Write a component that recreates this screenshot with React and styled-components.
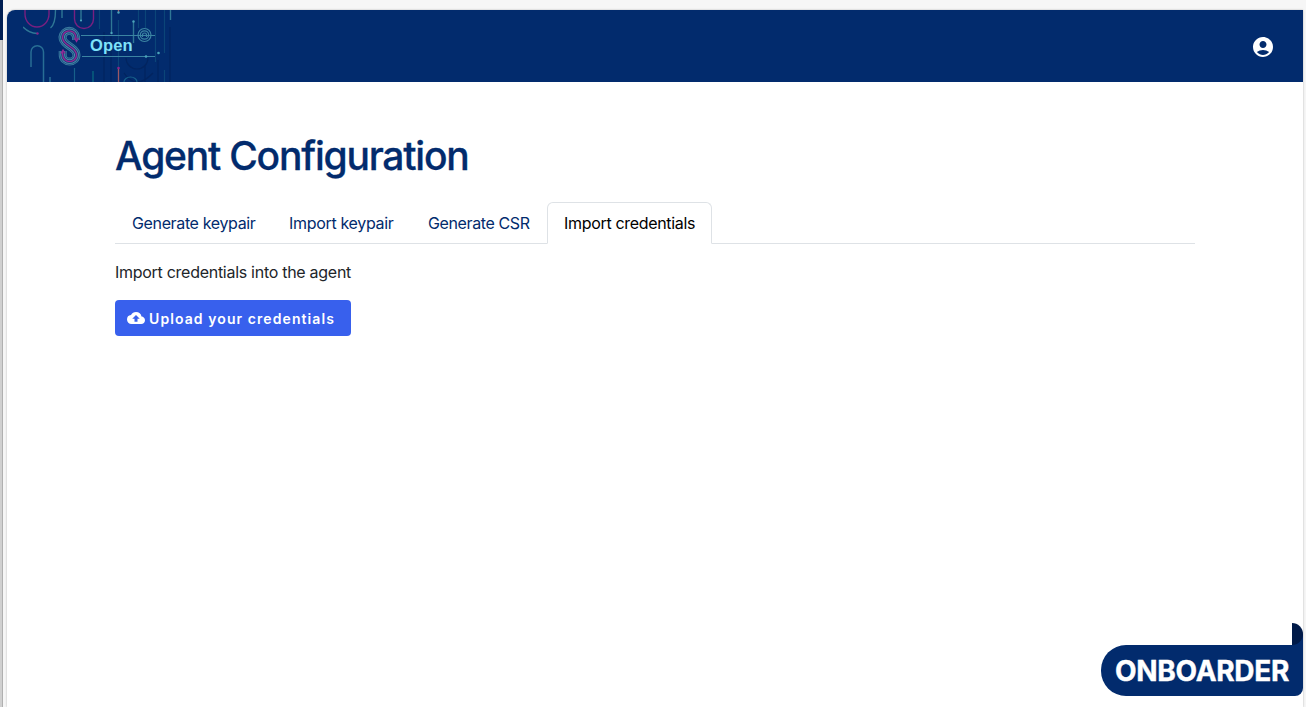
import React from "react";
import styled, { createGlobalStyle } from "styled-components";
import { MdAccountCircle, MdCloudUpload } from "react-icons/md";

const Global = createGlobalStyle`
  * { box-sizing: border-box; }
  html, body { margin: 0; height: 100%; overflow: hidden; }
  body { background: #f6f6f6; font-family: Inter, "Liberation Sans", sans-serif; font-size: 16px; line-height: 24px; color: #212529; }
`;

const Screen = styled.div`
  display: flex;
  height: 707px;
  width: 1306px;
`;

const BackWindow = styled.div`
  width: 3px;
  margin-right: 4px;
  background: linear-gradient(#001e52 0 40px, transparent 40px),
    linear-gradient(90deg, #d0d0d0 2px, #b0b0b0 2px);
`;

const AppWindow = styled.div`
  position: relative;
  display: flex;
  flex-direction: column;
  width: 1296px;
  margin-top: 10px;
  background: #fff;
  border-top-left-radius: 8px;
  overflow: hidden;
  box-shadow: 0 0 2px rgba(0, 0, 0, 0.3);
`;

const Header = styled.header`
  display: flex;
  justify-content: space-between;
  align-items: center;
  height: 72px;
  padding: 0 28px 0 16px;
  background: #022b6d;
`;

const Logo = styled.div`
  position: relative;
  width: 150px;
  height: 72px;
  svg { display: block; }
`;

const LogoText = styled.span`
  position: absolute;
  left: 67px;
  top: 23px;
  color: #7fe3fa;
  font: 700 16.5px/24px "Liberation Sans", sans-serif;
  letter-spacing: 0.15px;
`;

const AccountButton = styled.button`
  display: flex;
  padding: 0;
  margin-top: 2px;
  border: 0;
  background: none;
  color: #fff;
`;

const Main = styled.main`
  display: flex;
  flex-direction: column;
  align-items: flex-start;
  width: 1080px;
  margin: 49px 0 0 108px;
`;

const Title = styled.h1`
  margin: 0 0 23px;
  font-size: 39px;
  line-height: 49px;
  height: 48px;
  font-weight: 500;
  letter-spacing: -1.22px;
  color: #022b6d;
  -webkit-text-stroke: 0.3px #022b6d;
  white-space: nowrap;
`;

const Tabs = styled.nav`
  display: flex;
  width: 100%;
  border-bottom: 1px solid #dee2e6;
`;

const Tab = styled.a`
  width: ${(p) => p.$width}px;
  height: 42px;
  margin-bottom: -1px;
  padding: 8px 0 0 16px;
  border: 1px solid transparent;
  border-color: ${(p) => (p.$active ? "#dee2e6 #dee2e6 #fff" : "transparent")};
  border-radius: 6px 6px 0 0;
  background: ${(p) => (p.$active ? "#fff" : "none")};
  color: ${(p) => (p.$active ? "#000" : "#022b6d")};
  letter-spacing: ${(p) => p.$spacing}px;
  white-space: nowrap;
`;

const Description = styled.p`
  margin: 16px 0;
  letter-spacing: -0.28px;
`;

const UploadButton = styled.button`
  display: flex;
  align-items: center;
  gap: 4px;
  width: 236px;
  height: 36px;
  padding: 0 12px;
  border: 0;
  border-radius: 4px;
  background: #3860ed;
  color: #fff;
  font: 600 14px/24px Inter, sans-serif;
  letter-spacing: 1.08px;
  white-space: nowrap;
`;

const UploadLabel = styled.span`
  padding-top: 2px;
`;

const Ribbon = styled.div`
  position: absolute;
  right: 0;
  bottom: 11px;
  display: flex;
  flex-direction: column;
  align-items: flex-end;
`;

const RibbonFold = styled.div`
  width: 11px;
  height: 22px;
  background: linear-gradient(transparent 50%, #022b6d 50%);
  &::before {
    content: "";
    display: block;
    height: 22px;
    border-radius: 0 11px 11px 0;
    background: #001a48;
  }
`;

const RibbonBody = styled.div`
  width: 202px;
  height: 51px;
  padding-left: 14px;
  border-radius: 25px 0 8px 25px;
  background: #022b6d;
  color: #fff;
  font-size: 28px;
  font-weight: 700;
  line-height: 52px;
  letter-spacing: -0.3px;
  -webkit-text-stroke: 0.4px #fff;
  white-space: nowrap;
`;

const S_CURVE =
  "M76 40V37a6.800 7 0 0 0-13.500 0c0 3 1.500 5 4 7l5.500 4c3 2.200 4.500 4 4.500 7a6.800 6.500 0 0 1-13.800 0V51";

const LogoArt = () => (
  <svg width="150" height="72" viewBox="23 10 150 72" fill="none" strokeWidth="1.2">
    <g stroke="#02245f">
      <path d="M104 32V82M111 20V82M145 66V82M158 60V82M170 27V82M126 58a11 11 0 0 0 22 0M124 73q12 18 29 0" />
    </g>
    <g stroke="#0b4578">
      <path d="M118.500 20V78M138.500 10V28M145.500 10V28M155.500 10V62M164.500 10V53M164.500 70V87M99.500 10V29" />
    </g>
    <path d="M93 71V82" stroke="#07577a" strokeWidth="1.8" />
    <g stroke="#17608a">
      <path d="M74.500 68V82" />
      <path d="M31 67V52a6 6 0 0 1 12.500 0V82M50 77V82" strokeWidth="1.5" stroke="#286e94" />
      <path d="M124 82a6.500 5 0 0 1 13 0" />
    </g>
    <g stroke="#2f7795" strokeWidth="1.4">
      <path d="M23 27Q29 33 37 33.500M50.500 28Q55.500 24 55.500 10M62 10V18M81 10V21M111.500 10V32M133.500 22V43M170.500 10V20" />
    </g>
    <g stroke="#782080" strokeWidth="1.4">
      <path d="M25 10V14a12 13 0 0 0 24 0V10M74.500 10V19a9.500 9.500 0 0 0 19 0V10" />
    </g>
    <path d="M118.500 68V82M118.500 10V12" stroke="#9b5864" strokeWidth="1.3" />
    <g stroke="#3b84a2" strokeWidth="1.2">
      <path d="M81 35.500H155M82 56.500H155" />
      <circle cx="144.500" cy="35" r="6.500" />
      <circle cx="144.500" cy="35" r="4.200" />
      <path d="M142.500 37V35a2 2 0 0 1 4 0V37" />
    </g>
    <g fill="#4ba4ba">
      <circle cx="81" cy="20.500" r="1.100" />
      <circle cx="111.500" cy="33" r="1.200" />
      <circle cx="118.500" cy="12.500" r="1.200" />
      <circle cx="133.500" cy="21.500" r="1.200" />
      <circle cx="146" cy="56.500" r="1.300" />
      <circle cx="158.500" cy="53" r="1.300" />
    </g>
    <g fill="#8b2389">
      <circle cx="37.500" cy="33.500" r="1.200" />
      <circle cx="118.500" cy="68" r="1.300" />
    </g>
    <path d={S_CURVE} stroke="#3b7b9e" strokeWidth="8" />
    <path d={S_CURVE} stroke="#164d80" strokeWidth="6.200" />
    <path d={S_CURVE} stroke="#4b86a8" strokeWidth="4.800" />
    <path d={S_CURVE} stroke="#123b78" strokeWidth="2.800" />
    <path d={S_CURVE} stroke="#952894" strokeWidth="1.400" />
    <path d="M74.500 38l2 3.500 2-3.500M61 53.500l2-3.500 2 3.500" stroke="#952894" strokeWidth="1.300" />
  </svg>
);

const tabs = [
  { label: "Generate keypair", width: 157, spacing: -0.36 },
  { label: "Import keypair", width: 139, spacing: -0.32 },
  { label: "Generate CSR", width: 136, spacing: -0.38 },
  { label: "Import credentials", width: 165, spacing: -0.32, active: true },
];

export default function App() {
  return (
    <Screen>
      <Global />
      <BackWindow />
      <AppWindow>
        <Header>
          <Logo><LogoArt /><LogoText>Open</LogoText></Logo>
          <AccountButton aria-label="Account"><MdAccountCircle size={24} /></AccountButton>
        </Header>
        <Main>
          <Title>Agent Configuration</Title>
          <Tabs>
            {tabs.map((t) => (
              <Tab key={t.label} $width={t.width} $spacing={t.spacing} $active={t.active}>{t.label}</Tab>
            ))}
          </Tabs>
          <Description>Import credentials into the agent</Description>
          <UploadButton><MdCloudUpload size={18} /><UploadLabel>Upload your credentials</UploadLabel></UploadButton>
        </Main>
        <Ribbon><RibbonFold /><RibbonBody>ONBOARDER</RibbonBody></Ribbon>
      </AppWindow>
    </Screen>
  );
}
